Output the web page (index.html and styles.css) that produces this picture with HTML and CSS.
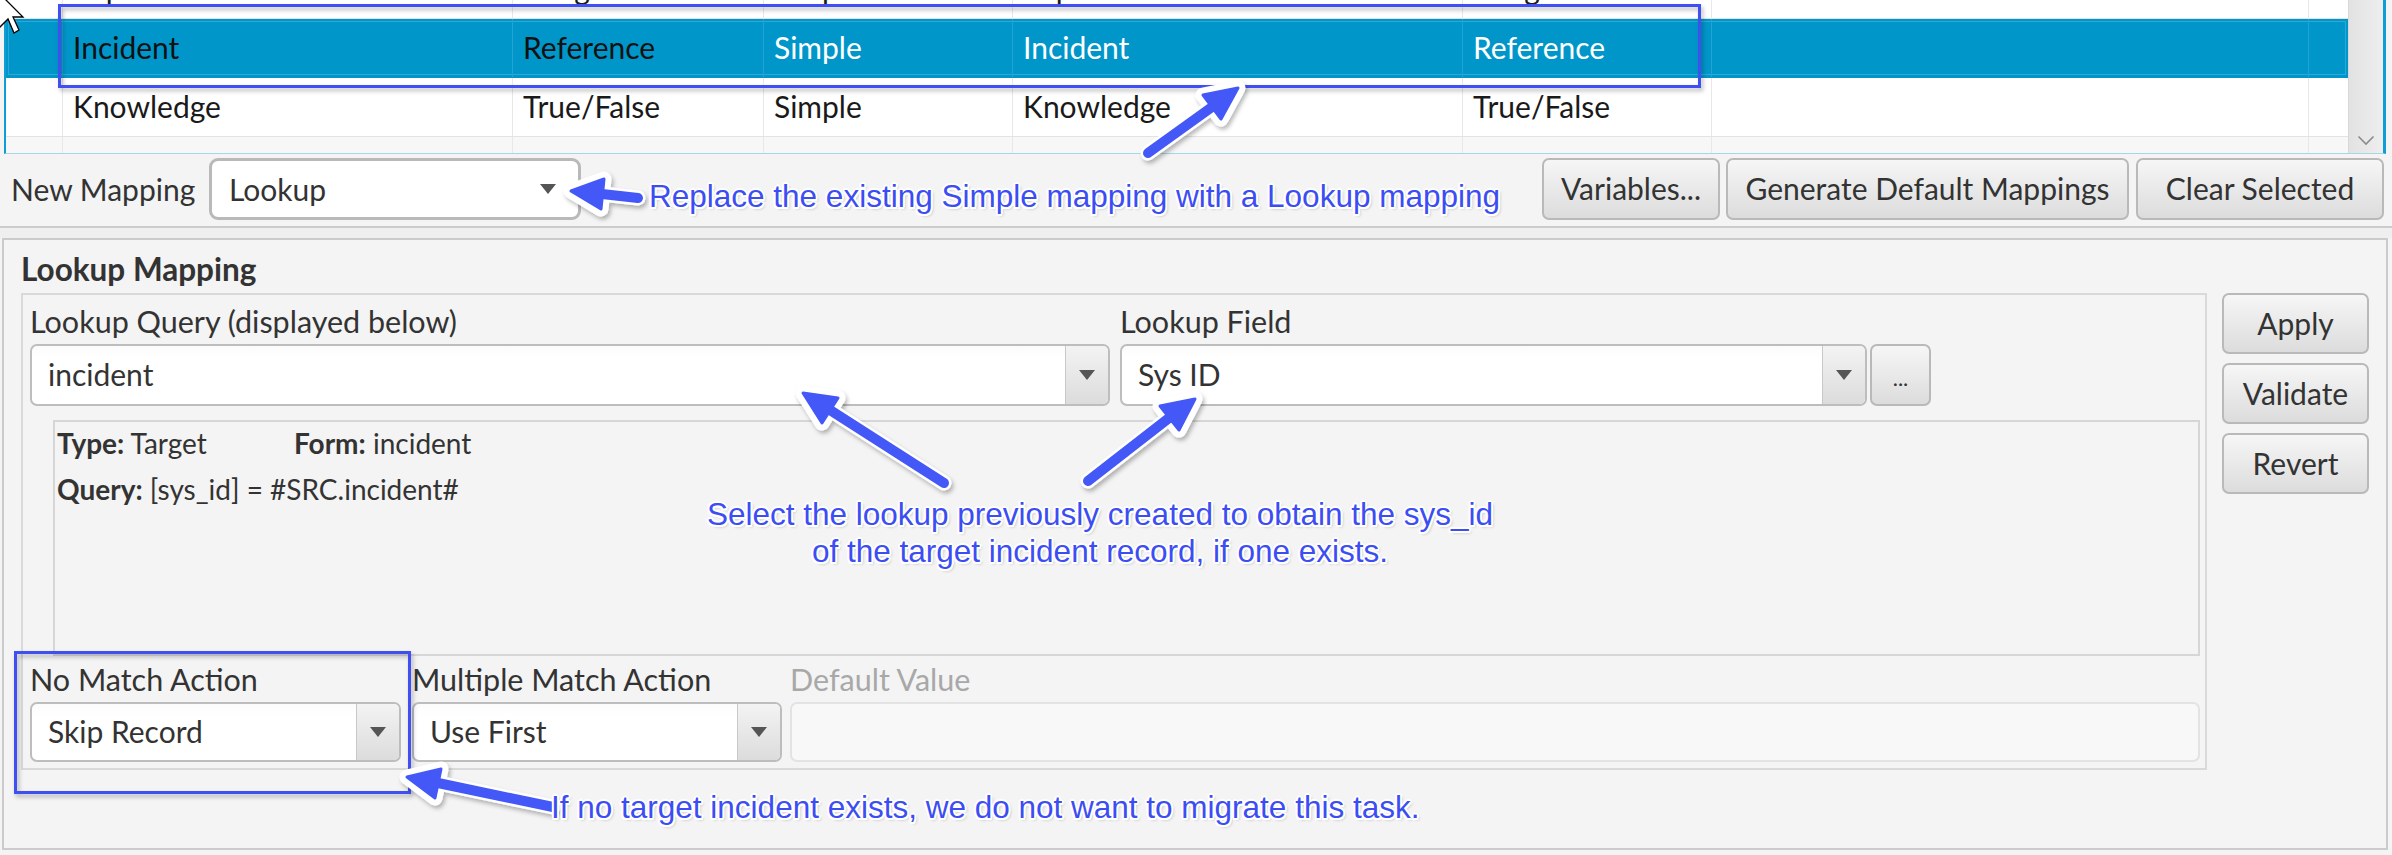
FILE: index.html
```html
<!DOCTYPE html>
<html>
<head>
<meta charset="utf-8">
<link rel="stylesheet" href="styles.css">
</head>
<body>
<div class="app">
  <div class="table">
    <div class="rows">
      <div class="row top">
        <div class="cell c0"></div><div class="cell c1">Impact</div><div class="cell c2">Integer</div><div class="cell c3">Simple</div><div class="cell c4">Impact</div><div class="cell c5">Integer</div><div class="cell c6"></div><div class="cell c7"></div>
      </div>
      <div class="row selected">
        <div class="cell c0"></div><div class="cell c1">Incident</div><div class="cell c2">Reference</div><div class="cell c3 light">Simple</div><div class="cell c4 light">Incident</div><div class="cell c5 light">Reference</div><div class="cell c6"></div><div class="cell c7"></div>
      </div>
      <div class="row">
        <div class="cell c0"></div><div class="cell c1">Knowledge</div><div class="cell c2">True/False</div><div class="cell c3">Simple</div><div class="cell c4">Knowledge</div><div class="cell c5">True/False</div><div class="cell c6"></div><div class="cell c7"></div>
      </div>
      <div class="row alt">
        <div class="cell c0"></div><div class="cell c1"></div><div class="cell c2"></div><div class="cell c3"></div><div class="cell c4"></div><div class="cell c5"></div><div class="cell c6"></div><div class="cell c7"></div>
      </div>
    </div>
    <div class="vscroll">
      <svg width="18" height="11" viewBox="0 0 18 11"><path d="M1.5 1.5 L9 9 L16.5 1.5" fill="none" stroke="#8c8c8c" stroke-width="1.6"/></svg>
    </div>
  </div>

  <div class="toolbar">
    <span class="tb-label">New Mapping</span>
    <div class="combo plain">
      <span class="val">Lookup</span>
      <span class="tri"></span>
    </div>
    <div class="spacer"></div>
    <button class="btn b-var">Variables...</button>
    <button class="btn b-gen">Generate Default Mappings</button>
    <button class="btn b-clr">Clear Selected</button>
  </div>

  <div class="divider"></div>

  <div class="panel">
    <div class="title">Lookup Mapping</div>
    <div class="panel-body">
      <div class="fieldset">
        <div class="fs-row1">
          <div class="field f-query">
            <div class="lbl">Lookup Query (displayed below)</div>
            <div class="combo">
              <span class="val">incident</span>
              <span class="abtn"><span class="tri"></span></span>
            </div>
          </div>
          <div class="field f-lookup">
            <div class="lbl">Lookup Field</div>
            <div class="combo-group">
              <div class="combo c-field">
                <span class="val">Sys ID</span>
                <span class="abtn"><span class="tri"></span></span>
              </div>
              <button class="btn dots">...</button>
            </div>
          </div>
        </div>
        <div class="info">
          <div class="info-line"><span class="info-type"><b>Type:</b> Target</span><span><b>Form:</b> incident</span></div>
          <div class="info-line"><b>Query:</b> [sys_id] = #SRC.incident#</div>
        </div>
        <div class="fs-row3">
          <div class="field f-nomatch">
            <div class="lbl">No Match Action</div>
            <div class="combo short">
              <span class="val">Skip Record</span>
              <span class="abtn"><span class="tri"></span></span>
            </div>
          </div>
          <div class="field f-multi">
            <div class="lbl">Multiple Match Action</div>
            <div class="combo short">
              <span class="val">Use First</span>
              <span class="abtn"><span class="tri"></span></span>
            </div>
          </div>
          <div class="field f-default">
            <div class="lbl disabled">Default Value</div>
            <div class="textfield"></div>
          </div>
        </div>
      </div>
      <div class="side-buttons">
        <button class="btn side">Apply</button>
        <button class="btn side">Validate</button>
        <button class="btn side">Revert</button>
      </div>
    </div>
  </div>
</div>

<svg class="overlay" width="2392" height="855" viewBox="0 0 2392 855">
  <defs>
    <filter id="sh" x="-10%" y="-10%" width="120%" height="130%">
      <feDropShadow dx="2" dy="3" stdDeviation="2" flood-color="#000" flood-opacity="0.28"/>
    </filter>
  </defs>
  <g filter="url(#sh)">
    <rect x="59.5" y="5.5" width="1640" height="81" fill="none" stroke="#3f4ff2" stroke-width="3"/>
    <rect x="15.5" y="652.5" width="394" height="140" fill="none" stroke="#3f4ff2" stroke-width="3"/>
  </g>
  <g filter="url(#sh)">
    <g stroke="#ffffff" stroke-width="15" stroke-linecap="round" stroke-linejoin="round" fill="#ffffff">
      <line x1="638" y1="198" x2="602" y2="194"/>
      <polygon points="571,191 604,179 601,209"/>
      <line x1="1148" y1="153" x2="1212" y2="107"/>
      <polygon points="1238,88 1221,119 1203,95"/>
      <line x1="944" y1="483" x2="830" y2="410"/>
      <polygon points="803,393 838,398 822,423"/>
      <line x1="1088" y1="481" x2="1169" y2="418"/>
      <polygon points="1195,399 1179,430 1160,406"/>
      <line x1="553" y1="807" x2="438" y2="783"/>
      <polygon points="407,777 441,769 435,798"/>
    </g>
  </g>
  <g stroke="#4358f6" stroke-width="10" stroke-linecap="round" stroke-linejoin="round" fill="#4358f6">
    <line x1="638" y1="198" x2="602" y2="194"/>
    <polygon points="571,191 604,179 601,209" stroke-width="3"/>
    <line x1="1148" y1="153" x2="1212" y2="107"/>
    <polygon points="1238,88 1221,119 1203,95" stroke-width="3"/>
    <line x1="944" y1="483" x2="830" y2="410"/>
    <polygon points="803,393 838,398 822,423" stroke-width="3"/>
    <line x1="1088" y1="481" x2="1169" y2="418"/>
    <polygon points="1195,399 1179,430 1160,406" stroke-width="3"/>
    <line x1="553" y1="807" x2="438" y2="783"/>
    <polygon points="407,777 441,769 435,798" stroke-width="3"/>
  </g>
</svg>

<div class="note n1">Replace the existing Simple mapping with a Lookup mapping</div>
<div class="note n2">Select the lookup previously created to obtain the sys_id<br>of the target incident record, if one exists.</div>
<div class="note n3">If no target incident exists, we do not want to migrate this task.</div>

<svg class="cursor" width="40" height="40" viewBox="0 0 40 40">
  <polygon points="-1,-7 -1,28 8,19 14,33 19,30 13,17 23,17" fill="#ffffff" stroke="#000000" stroke-width="1.3" stroke-linejoin="miter"/>
</svg>
</body>
</html>
```

FILE: styles.css
```css
* { box-sizing: border-box; margin: 0; padding: 0; }
html, body { width: 2392px; height: 855px; overflow: hidden; }
body {
  background: #f4f4f4;
  font-family: Lato, "Open Sans", sans-serif;
  color: #333333;
  position: relative;
}
.app { display: flex; flex-direction: column; height: 855px; }

/* ---------- table ---------- */
.table {
  display: flex;
  height: 154px;
  margin: 0 6px 0 4px;
  border-left: 2px solid #0f9dd5;
  border-right: 3px solid #0f9dd5;
  border-bottom: 1px solid #a9d6e6;
  background: #ffffff;
  flex: none;
}
.rows { flex: 1; overflow: hidden; }
.row {
  display: flex;
  height: 59px;
  border-bottom: 1px solid #e3e3e3;
  background: #ffffff;
}
.row.top { margin-top: -40px; }
.row.alt { background: #f7f7f7; }
.cell {
  border-right: 1px solid #e8e8e8;
  font-size: 30px;
  line-height: 56px;
  padding-left: 10px;
  white-space: nowrap;
  overflow: hidden;
  color: #1a1a1a;
  flex: none;
}
.c0 { width: 57px; }
.c1 { width: 450px; }
.c2 { width: 251px; }
.c3 { width: 249px; }
.c4 { width: 450px; }
.c5 { width: 249px; }
.c6 { width: 597px; }
.c7 { flex: 1; border-right: none; }
.row.selected {
  background: #0096c9;
  border-bottom-color: #0096c9;
  box-shadow: inset 0 0 0 2px #0096c9, inset 0 0 0 3px #2ea8d6;
}
.row.selected .cell { border-right-color: #23a3d3; color: #111111; }
.row.selected .cell.light { color: #ffffff; }
.row.selected .c7 { border-right: none; }

.vscroll {
  width: 35px;
  flex: none;
  background: linear-gradient(to right, #e2e2e2, #eeeeee);
  border-left: 1px solid #d8d8d8;
  display: flex;
  align-items: flex-end;
  justify-content: center;
  padding-bottom: 7px;
}

/* ---------- toolbar ---------- */
.toolbar {
  height: 72px;
  flex: none;
  display: flex;
  align-items: center;
  padding: 0 8px 3px 11px;
}
.tb-label { width: 198px; font-size: 30px; white-space: nowrap; }
.spacer { flex: 1; }

.combo {
  display: flex;
  align-items: stretch;
  height: 62px;
  background: linear-gradient(#fbfbfb, #ffffff 20%);
  border: 2px solid #bdbdbd;
  border-radius: 7px;
  overflow: hidden;
}
.combo .val {
  flex: 1;
  padding-left: 16px;
  font-size: 30px;
  line-height: 56px;
  white-space: nowrap;
  color: #333333;
}
.combo .abtn {
  width: 43px;
  flex: none;
  border-left: 1px solid #c8c8c8;
  background: linear-gradient(#f3f3f3, #dcdcdc);
  display: flex;
  align-items: center;
  justify-content: center;
}
.tri {
  width: 0; height: 0;
  border-left: 8px solid transparent;
  border-right: 8px solid transparent;
  border-top: 10px solid #555555;
}
.combo.plain {
  width: 372px;
  border: 3px solid #b9b9b9;
  border-radius: 9px;
  align-items: center;
  padding-right: 22px;
  background: #ffffff;
}
.combo.plain .val { padding-left: 17px; line-height: 54px; }

.btn {
  height: 62px;
  border: 2px solid #b9b9b9;
  border-radius: 7px;
  background: linear-gradient(#f6f6f6, #dcdcdc);
  font-family: Lato, "Open Sans", sans-serif;
  font-size: 30px;
  color: #333333;
  white-space: nowrap;
  padding-bottom: 2px;
}
.b-var { width: 178px; margin-right: 6px; }
.b-gen { width: 403px; margin-right: 7px; }
.b-clr { width: 248px; }

.divider {
  height: 12px;
  flex: none;
  border-top: 2px solid #cbcbcb;
  background: #efefef;
}

/* ---------- panel ---------- */
.panel {
  height: 612px;
  flex: none;
  margin: 0 4px 0 2px;
  border: 2px solid #cbcbcb;
  padding: 0 17px;
  background: #f4f4f4;
}
.title {
  height: 53px;
  padding-top: 9px;
  font-size: 31.5px;
  font-weight: 700;
  line-height: 40px;
  color: #333333;
}
.panel-body { display: flex; gap: 15px; align-items: flex-start; }
.fieldset {
  width: 2186px;
  border: 2px solid #d9d9d9;
  padding: 8px 5px 6px 7px;
}
.lbl {
  height: 38px;
  line-height: 36px;
  margin-bottom: 3px;
  font-size: 30.5px;
  white-space: nowrap;
  color: #333333;
}
.lbl.disabled { color: #a8a8a8; }

.fs-row1 { display: flex; gap: 10px; }
.f-query { width: 1080px; }
.combo-group { display: flex; gap: 3px; }
.c-field { width: 747px; }
.dots { width: 61px; font-size: 22px; line-height: 30px; padding-top: 8px; }

.info {
  margin: 14px 0 0 23px;
  height: 236px;
  border: 2px solid #d6d6d6;
  padding-left: 2px;
  font-size: 28px;
  color: #333333;
}
.info-line { height: 46px; line-height: 43px; white-space: nowrap; }
.info-type { display: inline-block; width: 237px; }
.info b { font-weight: 700; }

.fs-row3 { display: flex; margin-top: 5px; }
.f-nomatch { width: 371px; margin-right: 11px; }
.f-multi { width: 370px; margin-right: 8px; }
.f-default { flex: 1; }
.combo.short { height: 60px; }
.combo.short .val { line-height: 54px; }
.textfield {
  height: 60px;
  background: #f8f8f8;
  border: 2px solid #e3e3e3;
  border-radius: 7px;
}

.side-buttons { display: flex; flex-direction: column; gap: 9px; }
.btn.side { width: 147px; height: 61px; }

/* ---------- annotations ---------- */
.overlay { position: absolute; left: 0; top: 0; pointer-events: none; }
.note {
  position: absolute;
  font-family: "Liberation Sans", Arial, sans-serif;
  font-size: 31.5px;
  line-height: 37px;
  color: #3b4df3;
  white-space: nowrap;
  text-shadow: 2px 0 0 #fff, -2px 0 0 #fff, 0 2px 0 #fff, 0 -2px 0 #fff,
    1.5px 1.5px 0 #fff, -1.5px -1.5px 0 #fff, 1.5px -1.5px 0 #fff, -1.5px 1.5px 0 #fff,
    2px 2px 3px rgba(0,0,0,0.25);
}
.n1 { left: 649px; top: 178px; }
.n2 { left: 700px; top: 496px; width: 800px; text-align: center; }
.n3 { left: 551px; top: 789px; }

.cursor { position: absolute; left: 0; top: 0; }
```
